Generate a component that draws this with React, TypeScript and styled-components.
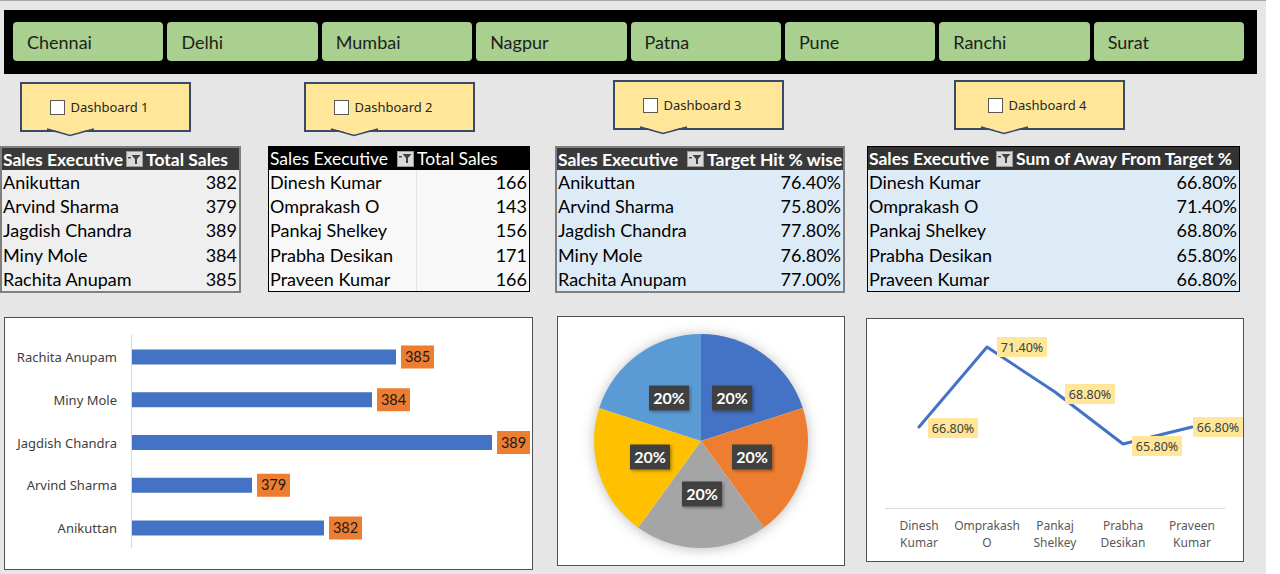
import React from 'react';
import styled, { createGlobalStyle } from 'styled-components';

const GlobalStyle = createGlobalStyle`
  html, body {
    margin: 0;
    padding: 0;
    background: #ffffff;
  }
  * { box-sizing: border-box; }
`;

const cities = ['Chennai', 'Delhi', 'Mumbai', 'Nagpur', 'Patna', 'Pune', 'Ranchi', 'Surat'];

const Page = styled.div`
  width: 1266px;
  height: 574px;
  background: #e6e6e6;
  border-top: 1px solid #a6a6a6;
  font-family: Lato, 'Liberation Sans', sans-serif;
  overflow: hidden;
`;

const SlicerBar = styled.div`
  margin: 9px 9px 0 4px;
  height: 64px;
  background: #000;
  padding: 12px 13px 0 9px;
  display: grid;
  grid-template-columns: repeat(8, 1fr);
  column-gap: 4px;
  align-items: start;
`;

const SlicerButton = styled.div`
  height: 39px;
  background: #a9d08e;
  border-radius: 4px;
  display: flex;
  align-items: center;
  padding-left: 14px;
  font-size: 18px;
  color: #1e1e1e;
`;

const CalloutRow = styled.div`
  height: 72px;
  display: flex;
  align-items: flex-start;
`;

const Callout = styled.div<{ $left: number; $top: number }>`
  position: relative;
  margin-left: ${(p) => p.$left}px;
  margin-top: ${(p) => p.$top}px;
  width: 171px;
  height: 50px;
  background: #ffe699;
  border: 2px solid #3a4a66;
  display: flex;
  align-items: center;
  justify-content: center;
  padding-right: ${(p) => (p.$left > 150 ? 4 : 12)}px;
  font-family: 'Noto Sans', 'Open Sans', sans-serif;
  font-size: 13px;
  color: #262626;
`;

const Pointer = styled.svg`
  position: absolute;
  left: 25px;
  top: calc(100% - 2px);
  width: 47px;
  height: 9px;
  overflow: visible;
`;

const CheckBox = styled.span`
  width: 15px;
  height: 15px;
  background: #fff;
  border: 1px solid #595959;
  margin-right: 5px;
  flex: none;
`;

const TablesRow = styled.div`
  height: 145px;
  display: flex;
  align-items: flex-start;
`;

const Table = styled.div<{ $left: number; $width: number; $c1: number; $bw: number; $border: string }>`
  margin-left: ${(p) => p.$left}px;
  width: ${(p) => p.$width}px;
  display: grid;
  grid-template-columns: ${(p) => p.$c1}px 1fr;
  grid-template-rows: ${(p) => 24 - p.$bw}px;
  grid-auto-rows: 24.2px;
  border: ${(p) => p.$bw}px solid ${(p) => p.$border};
  font-size: 18px;
  color: #000;
  overflow: hidden;
`;

const HeadCell = styled.div<{ $bg: string; $bold: boolean }>`
  background: ${(p) => p.$bg};
  color: #fff;
  font-weight: ${(p) => (p.$bold ? 700 : 400)};
  font-size: 17.5px;
  display: flex;
  align-items: center;
  padding: 0 1px;
  white-space: nowrap;
  overflow: hidden;
`;

const Cell = styled.div<{ $bg: string; $right?: boolean; $divider?: string }>`
  background: ${(p) => p.$bg};
  display: flex;
  align-items: center;
  justify-content: ${(p) => (p.$right ? 'flex-end' : 'flex-start')};
  padding: 0 2px 0 1px;
  border-left: ${(p) => (p.$divider ? `1px solid ${p.$divider}` : 'none')};
  white-space: nowrap;
`;

const FilterBox = styled.span`
  margin-left: auto;
  margin-right: 1px;
  width: 17px;
  height: 16px;
  background: #d9d9d9;
  border: 1px solid #9a9a9a;
  display: flex;
  align-items: center;
  justify-content: center;
  flex: none;
`;

const ChartsRow = styled.div`
  margin-top: 25px;
  display: flex;
  align-items: flex-start;
`;

const Panel = styled.div<{ $left: number; $top: number; $width: number; $height: number }>`
  margin-left: ${(p) => p.$left}px;
  margin-top: ${(p) => p.$top}px;
  width: ${(p) => p.$width}px;
  height: ${(p) => p.$height}px;
  background: #fff;
  border: 1px solid #505050;
  flex: none;
  svg { display: block; }
`;

const FilterIcon = () => (
  <FilterBox>
    <svg width="13" height="11" viewBox="0 0 13 11">
      <rect x="0" y="3" width="3" height="1.4" fill="#404040" />
      <polygon points="3.5,1 12.5,1 9,5 9,10 7,10 7,5" fill="#404040" />
    </svg>
  </FilterBox>
);

interface TableSpec {
  left: number;
  width: number;
  c1: number;
  bw: number;
  border: string;
  headBg: string;
  bold: boolean;
  rowBg: string;
  divider?: string;
  valueHead: string;
  rows: [string, string][];
}

const tables: TableSpec[] = [
  {
    left: 0, width: 241, c1: 143, bw: 2, border: '#7f7f7f', headBg: '#3a3a3a', bold: true, rowBg: '#efefef',
    valueHead: 'Total Sales',
    rows: [['Anikuttan', '382'], ['Arvind Sharma', '379'], ['Jagdish Chandra', '389'], ['Miny Mole', '384'], ['Rachita Anupam', '385']],
  },
  {
    left: 27, width: 262, c1: 147, bw: 1, border: '#000', headBg: '#000', bold: false, rowBg: '#f8f8f8', divider: '#e3e3e3',
    valueHead: 'Total Sales',
    rows: [['Dinesh Kumar', '166'], ['Omprakash O', '143'], ['Pankaj Shelkey', '156'], ['Prabha Desikan', '171'], ['Praveen Kumar', '166']],
  },
  {
    left: 25, width: 290, c1: 149, bw: 2, border: '#7f7f7f', headBg: '#3a3a3a', bold: true, rowBg: '#ddebf7',
    valueHead: 'Target Hit % wise',
    rows: [['Anikuttan', '76.40%'], ['Arvind Sharma', '75.80%'], ['Jagdish Chandra', '77.80%'], ['Miny Mole', '76.80%'], ['Rachita Anupam', '77.00%']],
  },
  {
    left: 22, width: 373, c1: 147, bw: 1, border: '#000', headBg: '#333333', bold: true, rowBg: '#ddebf7',
    valueHead: 'Sum of Away From Target %',
    rows: [['Dinesh Kumar', '66.80%'], ['Omprakash O', '71.40%'], ['Pankaj Shelkey', '68.80%'], ['Prabha Desikan', '65.80%'], ['Praveen Kumar', '66.80%']],
  },
];

const callouts = [
  { label: 'Dashboard 1', left: 20, top: 8 },
  { label: 'Dashboard 2', left: 113, top: 8 },
  { label: 'Dashboard 3', left: 138, top: 6 },
  { label: 'Dashboard 4', left: 170, top: 6 },
];

const barData = [
  { name: 'Rachita Anupam', value: 385 },
  { name: 'Miny Mole', value: 384 },
  { name: 'Jagdish Chandra', value: 389 },
  { name: 'Arvind Sharma', value: 379 },
  { name: 'Anikuttan', value: 382 },
];

const BarChart = () => (
  <svg width="527" height="251">
    <line x1="126.5" y1="17" x2="126.5" y2="230" stroke="#d9d9d9" strokeWidth="1" />
    {barData.map((d, i) => {
      const cy = 39 + i * 42.75;
      const w = (d.value - 374) * 24;
      return (
        <g key={d.name}>
          <text x="112" y={cy + 5} textAnchor="end" fontFamily="'Noto Sans', 'Open Sans', sans-serif" fontSize="13" fill="#404040">
            {d.name}
          </text>
          <rect x="127" y={cy - 7.5} width={w} height="15" fill="#4472c4" />
          <rect x={127 + w + 5} y={cy - 11.5} width="33" height="23" fill="#ed7d31" />
          <text x={127 + w + 21.5} y={cy + 5} textAnchor="middle" fontFamily="Lato, sans-serif" fontSize="14.5" fill="#1a1a1a">
            {d.value}
          </text>
        </g>
      );
    })}
  </svg>
);

const pieColors = ['#4472c4', '#ed7d31', '#a5a5a5', '#ffc000', '#5b9bd5'];
const pieLabels = [
  [174, 81], [194, 140], [144, 177], [92, 140], [111, 81],
];

const slicePath = (cx: number, cy: number, r: number, a0: number, a1: number) => {
  const pt = (a: number) => [cx + r * Math.sin((a * Math.PI) / 180), cy - r * Math.cos((a * Math.PI) / 180)];
  const [x0, y0] = pt(a0);
  const [x1, y1] = pt(a1);
  return `M ${cx} ${cy} L ${x0} ${y0} A ${r} ${r} 0 0 1 ${x1} ${y1} Z`;
};

const PieChart = () => (
  <svg width="286" height="248">
    <defs>
      <filter id="pieShadow" x="-30%" y="-30%" width="160%" height="160%">
        <feDropShadow dx="0" dy="1" stdDeviation="7" floodColor="#000" floodOpacity="0.3" />
      </filter>
      <filter id="tagShadow" x="-30%" y="-30%" width="160%" height="160%">
        <feDropShadow dx="1.5" dy="1.5" stdDeviation="1.5" floodColor="#000" floodOpacity="0.35" />
      </filter>
    </defs>
    <circle cx="143" cy="124" r="106" fill="#fff" filter="url(#pieShadow)" />
    {pieColors.map((c, i) => (
      <path key={c} d={slicePath(143, 124, 107, i * 72, (i + 1) * 72)} fill={c} />
    ))}
    {pieLabels.map(([x, y], i) => (
      <g key={i}>
        <rect x={x - 20} y={y - 12.5} width="40" height="25" fill="#404040" filter="url(#tagShadow)" />
        <text x={x} y={y + 5.5} textAnchor="middle" fontFamily="Lato, sans-serif" fontWeight="700" fontSize="16" fill="#fff">
          20%
        </text>
      </g>
    ))}
  </svg>
);

const linePoints = [
  { x: 52, y: 108, label: '66.80%', lx: 61, ly: 99, cat: ['Dinesh', 'Kumar'] },
  { x: 120, y: 28, label: '71.40%', lx: 130, ly: 18, cat: ['Omprakash', 'O'] },
  { x: 188, y: 73, label: '68.80%', lx: 198, ly: 65, cat: ['Pankaj', 'Shelkey'] },
  { x: 256, y: 125, label: '65.80%', lx: 265, ly: 117, cat: ['Prabha', 'Desikan'] },
  { x: 325, y: 108, label: '66.80%', lx: 326, ly: 98, cat: ['Praveen', 'Kumar'] },
];

const LineChart = () => (
  <svg width="376" height="242">
    <line x1="18" y1="189.5" x2="358" y2="189.5" stroke="#d9d9d9" strokeWidth="1" />
    <polyline
      points={linePoints.map((p) => `${p.x},${p.y}`).join(' ')}
      fill="none"
      stroke="#4472c4"
      strokeWidth="3"
      strokeLinejoin="round"
      strokeLinecap="round"
    />
    {linePoints.map((p, i) => (
      <g key={i}>
        <rect x={p.lx} y={p.ly} width="50" height="20" fill="#ffe699" />
        <text x={p.lx + 25} y={p.ly + 14.5} textAnchor="middle" fontFamily="'Noto Sans', 'Open Sans', sans-serif" fontSize="12.5" fill="#404040">
          {p.label}
        </text>
        <text textAnchor="middle" fontFamily="'Noto Sans', 'Open Sans', sans-serif" fontSize="12" fill="#595959">
          <tspan x={p.x} y="211">{p.cat[0]}</tspan>
          <tspan x={p.x} y="228">{p.cat[1]}</tspan>
        </text>
      </g>
    ))}
  </svg>
);

const App: React.FC = () => (
  <>
    <GlobalStyle />
    <Page>
      <SlicerBar>
        {cities.map((c) => (
          <SlicerButton key={c}>{c}</SlicerButton>
        ))}
      </SlicerBar>

      <CalloutRow>
        {callouts.map((c) => (
          <Callout key={c.label} $left={c.left} $top={c.top}>
            <CheckBox />
            {c.label}
            <Pointer viewBox="0 0 47 9">
              <polygon points="0,0 47,0 23,7" fill="#ffe699" />
              <polyline points="0,1 23,7.5 47,1" fill="none" stroke="#3a4a66" strokeWidth="1.6" />
            </Pointer>
          </Callout>
        ))}
      </CalloutRow>

      <TablesRow>
        {tables.map((t, ti) => (
          <Table key={ti} $left={t.left} $width={t.width} $c1={t.c1} $bw={t.bw} $border={t.border}>
            <HeadCell $bg={t.headBg} $bold={t.bold}>
              Sales Executive
              <FilterIcon />
            </HeadCell>
            <HeadCell $bg={t.headBg} $bold={t.bold}>{t.valueHead}</HeadCell>
            {t.rows.map(([name, val]) => (
              <React.Fragment key={name}>
                <Cell $bg={t.rowBg}>{name}</Cell>
                <Cell $bg={t.rowBg} $right $divider={t.divider}>{val}</Cell>
              </React.Fragment>
            ))}
          </Table>
        ))}
      </TablesRow>

      <ChartsRow>
        <Panel $left={4} $top={1} $width={529} $height={253}>
          <BarChart />
        </Panel>
        <Panel $left={24} $top={0} $width={288} $height={250}>
          <PieChart />
        </Panel>
        <Panel $left={21} $top={2} $width={378} $height={244}>
          <LineChart />
        </Panel>
      </ChartsRow>
    </Page>
  </>
);

export default App;
